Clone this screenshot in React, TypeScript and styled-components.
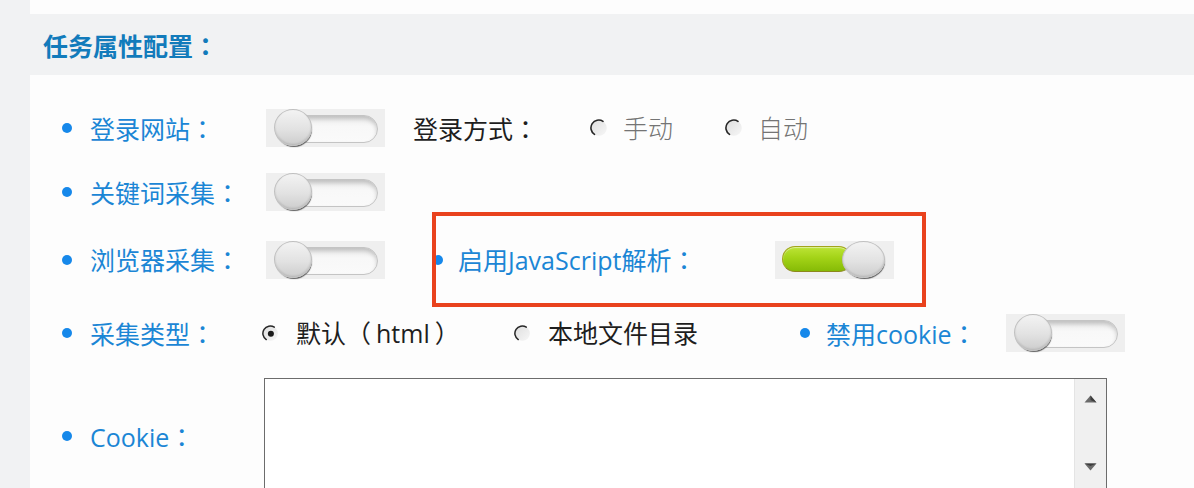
import React, { useId } from "react";
import styled, { createGlobalStyle } from "styled-components";

const GlobalStyle = createGlobalStyle`
  html, body { margin: 0; padding: 0; background: #f1f2f3; overflow: hidden; }
  body { font-family: "Open Sans", "Noto Sans CJK SC", sans-serif; }
  * { box-sizing: border-box; }
`;

const Page = styled.div`
  display: flex;
  height: 488px;
  padding-left: 30px;
  background: #f1f2f3;
  overflow: hidden;
`;

const Main = styled.div`
  flex: 1;
  min-width: 0;
  display: flex;
  flex-direction: column;
`;

const TopStrip = styled.div`
  height: 14px;
  flex-shrink: 0;
  background: #fdfdfd;
`;

const Header = styled.div`
  height: 61px;
  flex-shrink: 0;
  display: flex;
  align-items: center;
  padding-left: 13px;
  font-family: "Noto Sans CJK SC", sans-serif;
  font-size: 25px;
  font-weight: 700;
  color: #127bbb;
`;

const Colon = styled.span`
  font-family: "Noto Sans CJK TC", "Noto Sans CJK SC", sans-serif;
`;

const Inner = styled.span`
  display: inline-block;
  padding: 0 5px;
`;

const Panel = styled.div`
  flex: 1;
  background: #fdfdfd;
  padding-top: 33px;
  display: flex;
  flex-direction: column;
`;

const Row = styled.div<{ $h: number; $mt?: number }>`
  display: flex;
  align-items: center;
  height: ${(p) => p.$h}px;
  margin-top: ${(p) => p.$mt ?? 0}px;
  padding-left: 32px;
  flex-shrink: 0;
`;

const Bullet = styled.span<{ $ml?: number; $mr?: number; $size?: number }>`
  width: ${(p) => p.$size ?? 10}px;
  height: ${(p) => p.$size ?? 10}px;
  border-radius: 50%;
  background: #1688ea;
  flex-shrink: 0;
  margin-left: ${(p) => p.$ml ?? 0}px;
  margin-right: ${(p) => p.$mr ?? 18}px;
`;

const Label = styled.span<{ $w: number }>`
  width: ${(p) => p.$w}px;
  flex-shrink: 0;
  font-size: 25px;
  line-height: 1.2;
  color: #1b86d5;
  white-space: nowrap;
`;

const DarkLabel = styled.span<{ $w: number; $ml?: number }>`
  width: ${(p) => p.$w}px;
  margin-left: ${(p) => p.$ml ?? 0}px;
  flex-shrink: 0;
  font-size: 25px;
  line-height: 1.2;
  color: #1e1e1e;
  white-space: nowrap;
`;

const RadioOption = styled.label<{ $w?: number; $gap: number; $muted?: boolean }>`
  display: flex;
  align-items: center;
  gap: ${(p) => p.$gap}px;
  width: ${(p) => (p.$w ? `${p.$w}px` : "auto")};
  flex-shrink: 0;
  font-size: 25px;
  line-height: 1.2;
  color: ${(p) => (p.$muted ? "#747474" : "#1e1e1e")};
  white-space: nowrap;
  font-weight: ${(p) => (p.$muted ? 300 : 400)};
`;

const SwitchBox = styled.div`
  position: relative;
  width: 119px;
  height: 38px;
  flex-shrink: 0;
  background: #efefef;
`;

const Track = styled.div<{ $on: boolean }>`
  position: absolute;
  top: ${(p) => (p.$on ? 5 : 6)}px;
  left: ${(p) => (p.$on ? 7 : 12)}px;
  width: ${(p) => (p.$on ? 70 : 100)}px;
  height: ${(p) => (p.$on ? 26 : 28)}px;
  border-radius: 14px;
  ${(p) =>
    p.$on
      ? `
    background: linear-gradient(#bde436 0%, #a3d317 45%, #86bb06 100%);
    border: 1px solid #a2a51c;
    border-bottom-color: #8c881c;
    box-shadow: inset 0 1px 1px rgba(255,255,255,0.5);
  `
      : `
    background: linear-gradient(#e9e9e9 0%, #f8f8f8 40%, #fafafa 100%);
    border: 1px solid #c4c4c4;
    box-shadow: inset 0 3px 4px rgba(0,0,0,0.18);
  `}
`;

const Knob = styled.div<{ $on: boolean }>`
  position: absolute;
  top: 0;
  left: ${(p) => (p.$on ? 67 : 8)}px;
  width: ${(p) => (p.$on ? 43 : 38)}px;
  height: 37px;
  border-radius: 50%;
  background: linear-gradient(#f3f3f3 0%, #e2e2e2 55%, #cdcdcd 100%);
  border: 1px solid #c0c0c0;
  box-shadow: 1px 2px 1px -1px #5e5e5e, inset 0 -1px 2px rgba(0, 0, 0, 0.12);
`;

const Highlight = styled.div`
  margin-left: 47px;
  width: 494px;
  height: 95px;
  border: 4px solid #e9421d;
  display: flex;
  align-items: center;
  overflow: hidden;
  flex-shrink: 0;
`;

const TextBox = styled.div`
  width: 843px;
  height: 116px;
  border: 1px solid #6c6c6c;
  background: #ffffff;
  display: flex;
  flex-shrink: 0;
`;

const TextArea = styled.textarea`
  flex: 1;
  border: none;
  outline: none;
  resize: none;
  background: transparent;
  font-family: inherit;
  font-size: 16px;
`;

const ScrollBar = styled.div`
  width: 32px;
  background: #f0f0f0;
  border-left: 1px solid #e4e4e4;
  display: flex;
  flex-direction: column;
  align-items: center;
  justify-content: space-between;
  padding: 16px 0 22px;
`;

function Switch({ on }: { on: boolean }) {
  return (
    <SwitchBox role="switch" aria-checked={on}>
      <Track $on={on} />
      <Knob $on={on} />
    </SwitchBox>
  );
}

function RadioIcon({ checked, size = 18 }: { checked?: boolean; size?: number }) {
  const id = useId().replace(/:/g, "");
  return (
    <svg width={size} height={size} viewBox="0 0 18 18">
      <defs>
        <linearGradient id={`g${id}`} x1="0" y1="0" x2="1" y2="1">
          <stop offset="0" stopColor="#dedede" />
          <stop offset="1" stopColor="#f7f7f7" />
        </linearGradient>
      </defs>
      <circle cx="9" cy="9" r="7.8" fill={`url(#g${id})`} />
      <path d="M13 2.3 A7.8 7.8 0 0 0 4.5 15.4" fill="none" stroke="#262626" strokeWidth="1.6" strokeLinecap="round" />
      {checked && <circle cx="9.4" cy="9.2" r="3.2" fill="#1a1a1a" />}
    </svg>
  );
}

function ArrowUp() {
  return (
    <svg width="13" height="8" viewBox="0 0 13 8">
      <path d="M6.5 0.5 L12.5 7.5 L0.5 7.5 Z" fill="#6a6a6a" />
      <path d="M6.5 0.5 L12.5 7.5 L6.5 5 Z" fill="#3c3c3c" />
    </svg>
  );
}

function ArrowDown() {
  return (
    <svg width="13" height="8" viewBox="0 0 13 8">
      <path d="M0.5 0.5 L12.5 0.5 L6.5 7.5 Z" fill="#6a6a6a" />
      <path d="M0.5 0.5 L12.5 0.5 L6.5 3 Z" fill="#3c3c3c" />
    </svg>
  );
}

export default function App() {
  return (
    <>
      <GlobalStyle />
      <Page>
        <Main>
          <TopStrip />
          <Header>
            任务属性配置<Colon>：</Colon>
          </Header>
          <Panel>
            <Row $h={40}>
              <Bullet />
              <Label $w={176}>
                登录网站<Colon>：</Colon>
              </Label>
              <Switch on={false} />
              <DarkLabel $w={177} $ml={28}>
                登录方式<Colon>：</Colon>
              </DarkLabel>
              <RadioOption $w={135} $gap={15} $muted>
                <RadioIcon />
                手动
              </RadioOption>
              <RadioOption $gap={15} $muted>
                <RadioIcon />
                自动
              </RadioOption>
            </Row>

            <Row $h={40} $mt={24}>
              <Bullet />
              <Label $w={176}>
                关键词采集<Colon>：</Colon>
              </Label>
              <Switch on={false} />
            </Row>

            <Row $h={95}>
              <Bullet />
              <Label $w={176}>
                浏览器采集<Colon>：</Colon>
              </Label>
              <Switch on={false} />
              <Highlight>
                <Bullet $ml={-3} $mr={15} />
                <Label $w={317}>
                  启用JavaScript解析<Colon>：</Colon>
                </Label>
                <Switch on={true} />
              </Highlight>
            </Row>

            <Row $h={40} $mt={6}>
              <Bullet />
              <Label $w={172}>
                采集类型<Colon>：</Colon>
              </Label>
              <RadioOption $w={252} $gap={17}>
                <RadioIcon checked size={17} />
                <span>
                  默认（<Inner>html</Inner>）
                </span>
              </RadioOption>
              <RadioOption $w={286} $gap={17}>
                <RadioIcon size={17} />
                本地文件目录
              </RadioOption>
              <Bullet $mr={16} />
              <Label $w={180}>
                禁用cookie<Colon>：</Colon>
              </Label>
              <Switch on={false} />
            </Row>

            <Row $h={116} $mt={25}>
              <Bullet />
              <Label $w={174}>
                Cookie<Colon>：</Colon>
              </Label>
              <TextBox>
                <TextArea aria-label="Cookie" />
                <ScrollBar>
                  <ArrowUp />
                  <ArrowDown />
                </ScrollBar>
              </TextBox>
            </Row>
          </Panel>
        </Main>
      </Page>
    </>
  );
}
